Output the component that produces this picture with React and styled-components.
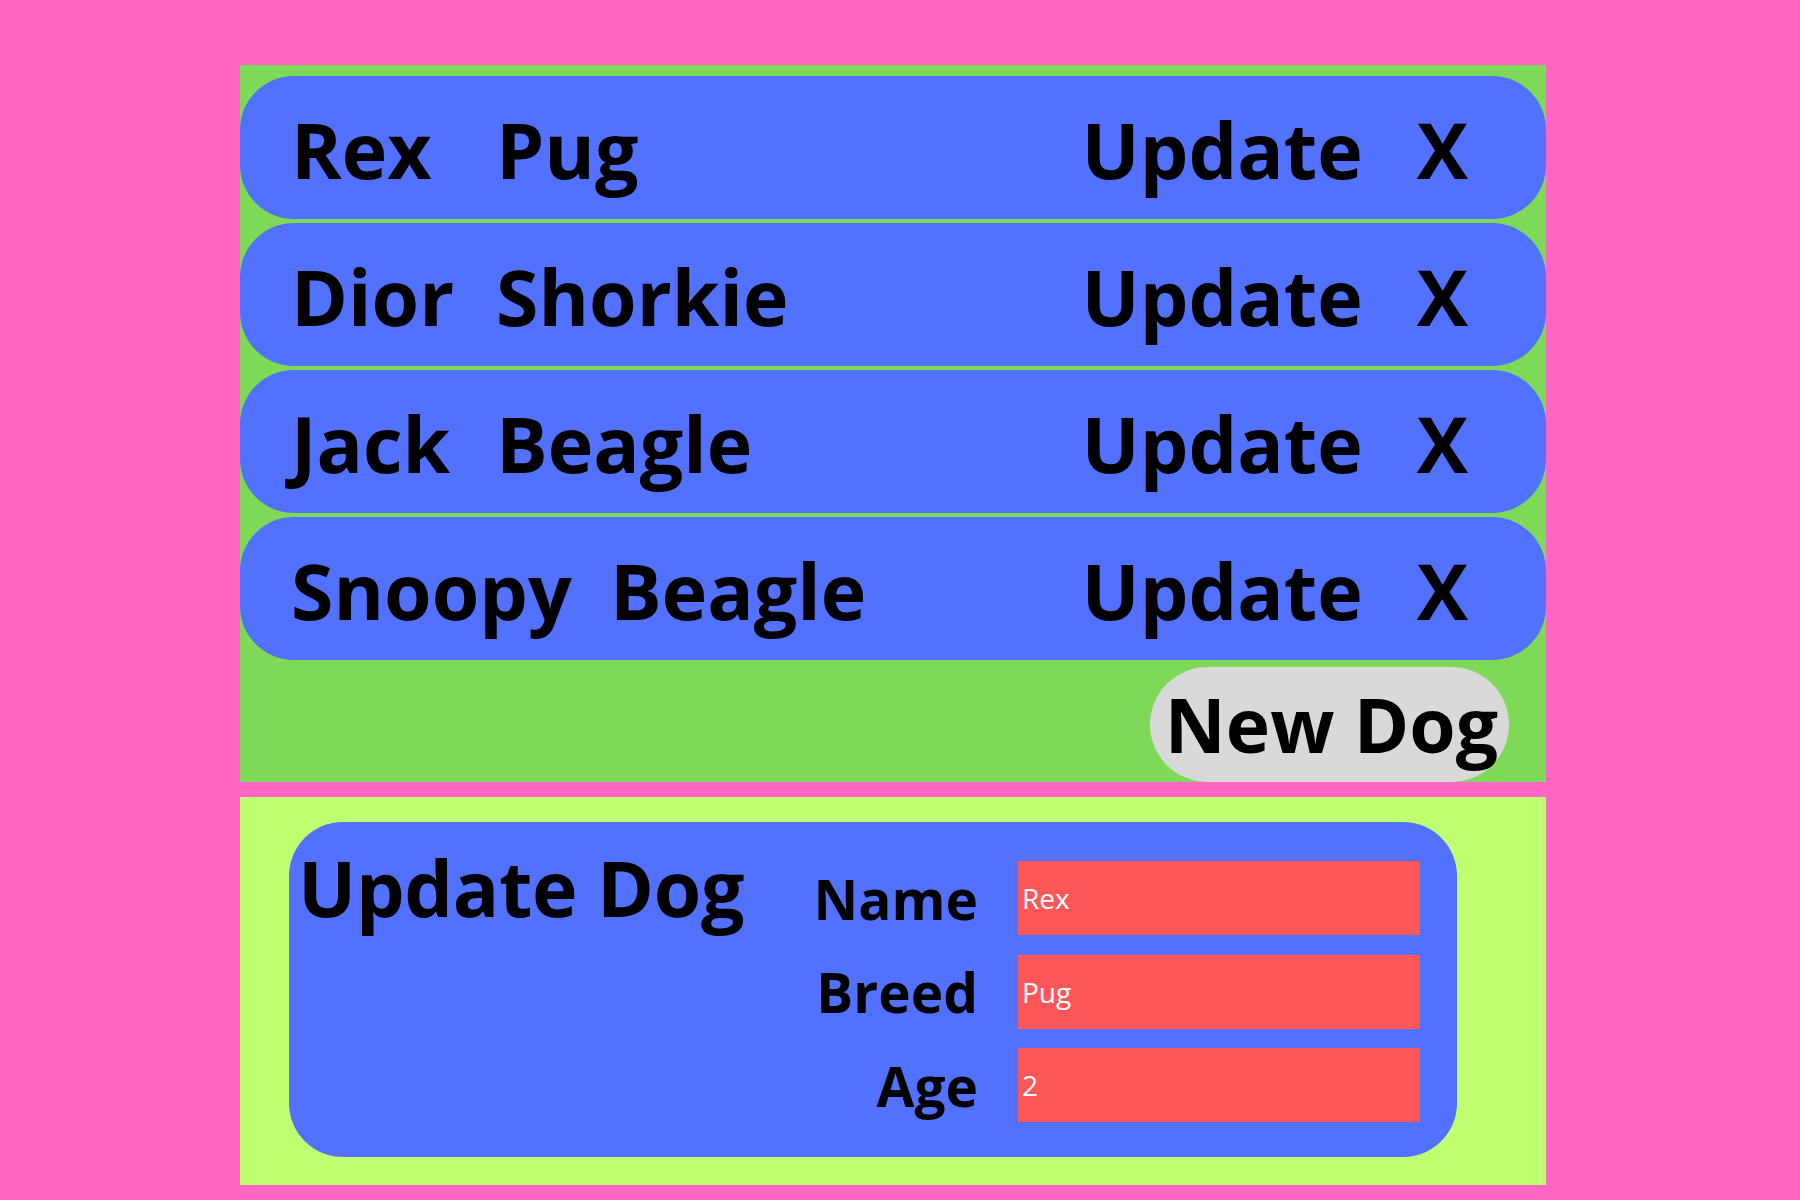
import React from 'react';
import styled, { createGlobalStyle } from 'styled-components';

const GlobalStyle = createGlobalStyle`
  body {
    margin: 0;
    background: #ff66c4;
    font-family: "Open Sans", "Noto Sans", sans-serif;
  }
`;

const Page = styled.div`
  min-height: 1200px;
  box-sizing: border-box;
  padding: 65px 254px 15px 240px;
  display: flex;
  flex-direction: column;
  gap: 15px;
`;

const ListPanel = styled.div`
  background: #7ed957;
  padding-top: 11px;
  display: flex;
  flex-direction: column;
  gap: 4px;
`;

const Row = styled.div`
  height: 143px;
  box-sizing: border-box;
  background: #5271ff;
  border-radius: 54px;
  display: flex;
  align-items: center;
  padding: 4px 78px 0 51px;
  font-size: 77px;
  font-weight: 700;
  line-height: 1;
  color: #000;
`;

const DogName = styled.span`
  min-width: 167px;
  margin-right: 38px;
`;

const Breed = styled.span`
  flex: 1;
`;

const Action = styled.span`
  margin-left: ${p => p.gap || 0}px;
  cursor: pointer;
`;

const Footer = styled.div`
  display: flex;
  justify-content: flex-end;
  padding: 3px 37px 0 0;
`;

const NewButton = styled.button`
  width: 359px;
  height: 115px;
  border: none;
  border-radius: 58px;
  background: #d9d9d9;
  font-family: inherit;
  font-size: 75px;
  font-weight: 700;
  line-height: 1;
  color: #000;
  padding: 0 0 0 4px;
`;

const FormPanel = styled.div`
  background: #c1ff72;
  padding: 25px 0 28px 49px;
  display: flex;
`;

const Card = styled.div`
  width: 1168px;
  height: 335px;
  box-sizing: border-box;
  background: #5271ff;
  border-radius: 54px;
  display: flex;
  padding: 27px 37px 0 9px;
`;

const Title = styled.h2`
  margin: 0;
  font-size: 77px;
  font-weight: 700;
  line-height: 1;
  letter-spacing: -0.3px;
  color: #000;
`;

const Fields = styled.div`
  margin: 12px 0 0 auto;
  display: grid;
  grid-template-columns: auto 402px;
  grid-auto-rows: 74px;
  column-gap: 40px;
  row-gap: 19.5px;
  align-items: center;
`;

const Label = styled.label`
  text-align: right;
  font-size: 55px;
  font-weight: 700;
  line-height: 1;
  color: #000;
`;

const Input = styled.input`
  height: 74px;
  box-sizing: border-box;
  border: none;
  outline: none;
  background: #ff5757;
  color: #fff;
  font-family: inherit;
  font-size: 28px;
  padding: 0 4px;
`;

const dogs = [
  { name: 'Rex', breed: 'Pug' },
  { name: 'Dior', breed: 'Shorkie' },
  { name: 'Jack', breed: 'Beagle' },
  { name: 'Snoopy', breed: 'Beagle' },
];

export default function App() {
  return (
    <>
      <GlobalStyle />
      <Page>
        <ListPanel>
          {dogs.map(d => (
            <Row key={d.name}>
              <DogName>{d.name}</DogName>
              <Breed>{d.breed}</Breed>
              <Action>Update</Action>
              <Action gap={54}>X</Action>
            </Row>
          ))}
          <Footer>
            <NewButton>New Dog</NewButton>
          </Footer>
        </ListPanel>
        <FormPanel>
          <Card>
            <Title>Update Dog</Title>
            <Fields>
              <Label>Name</Label>
              <Input defaultValue="Rex" />
              <Label>Breed</Label>
              <Input defaultValue="Pug" />
              <Label>Age</Label>
              <Input defaultValue="2" />
            </Fields>
          </Card>
        </FormPanel>
      </Page>
    </>
  );
}
